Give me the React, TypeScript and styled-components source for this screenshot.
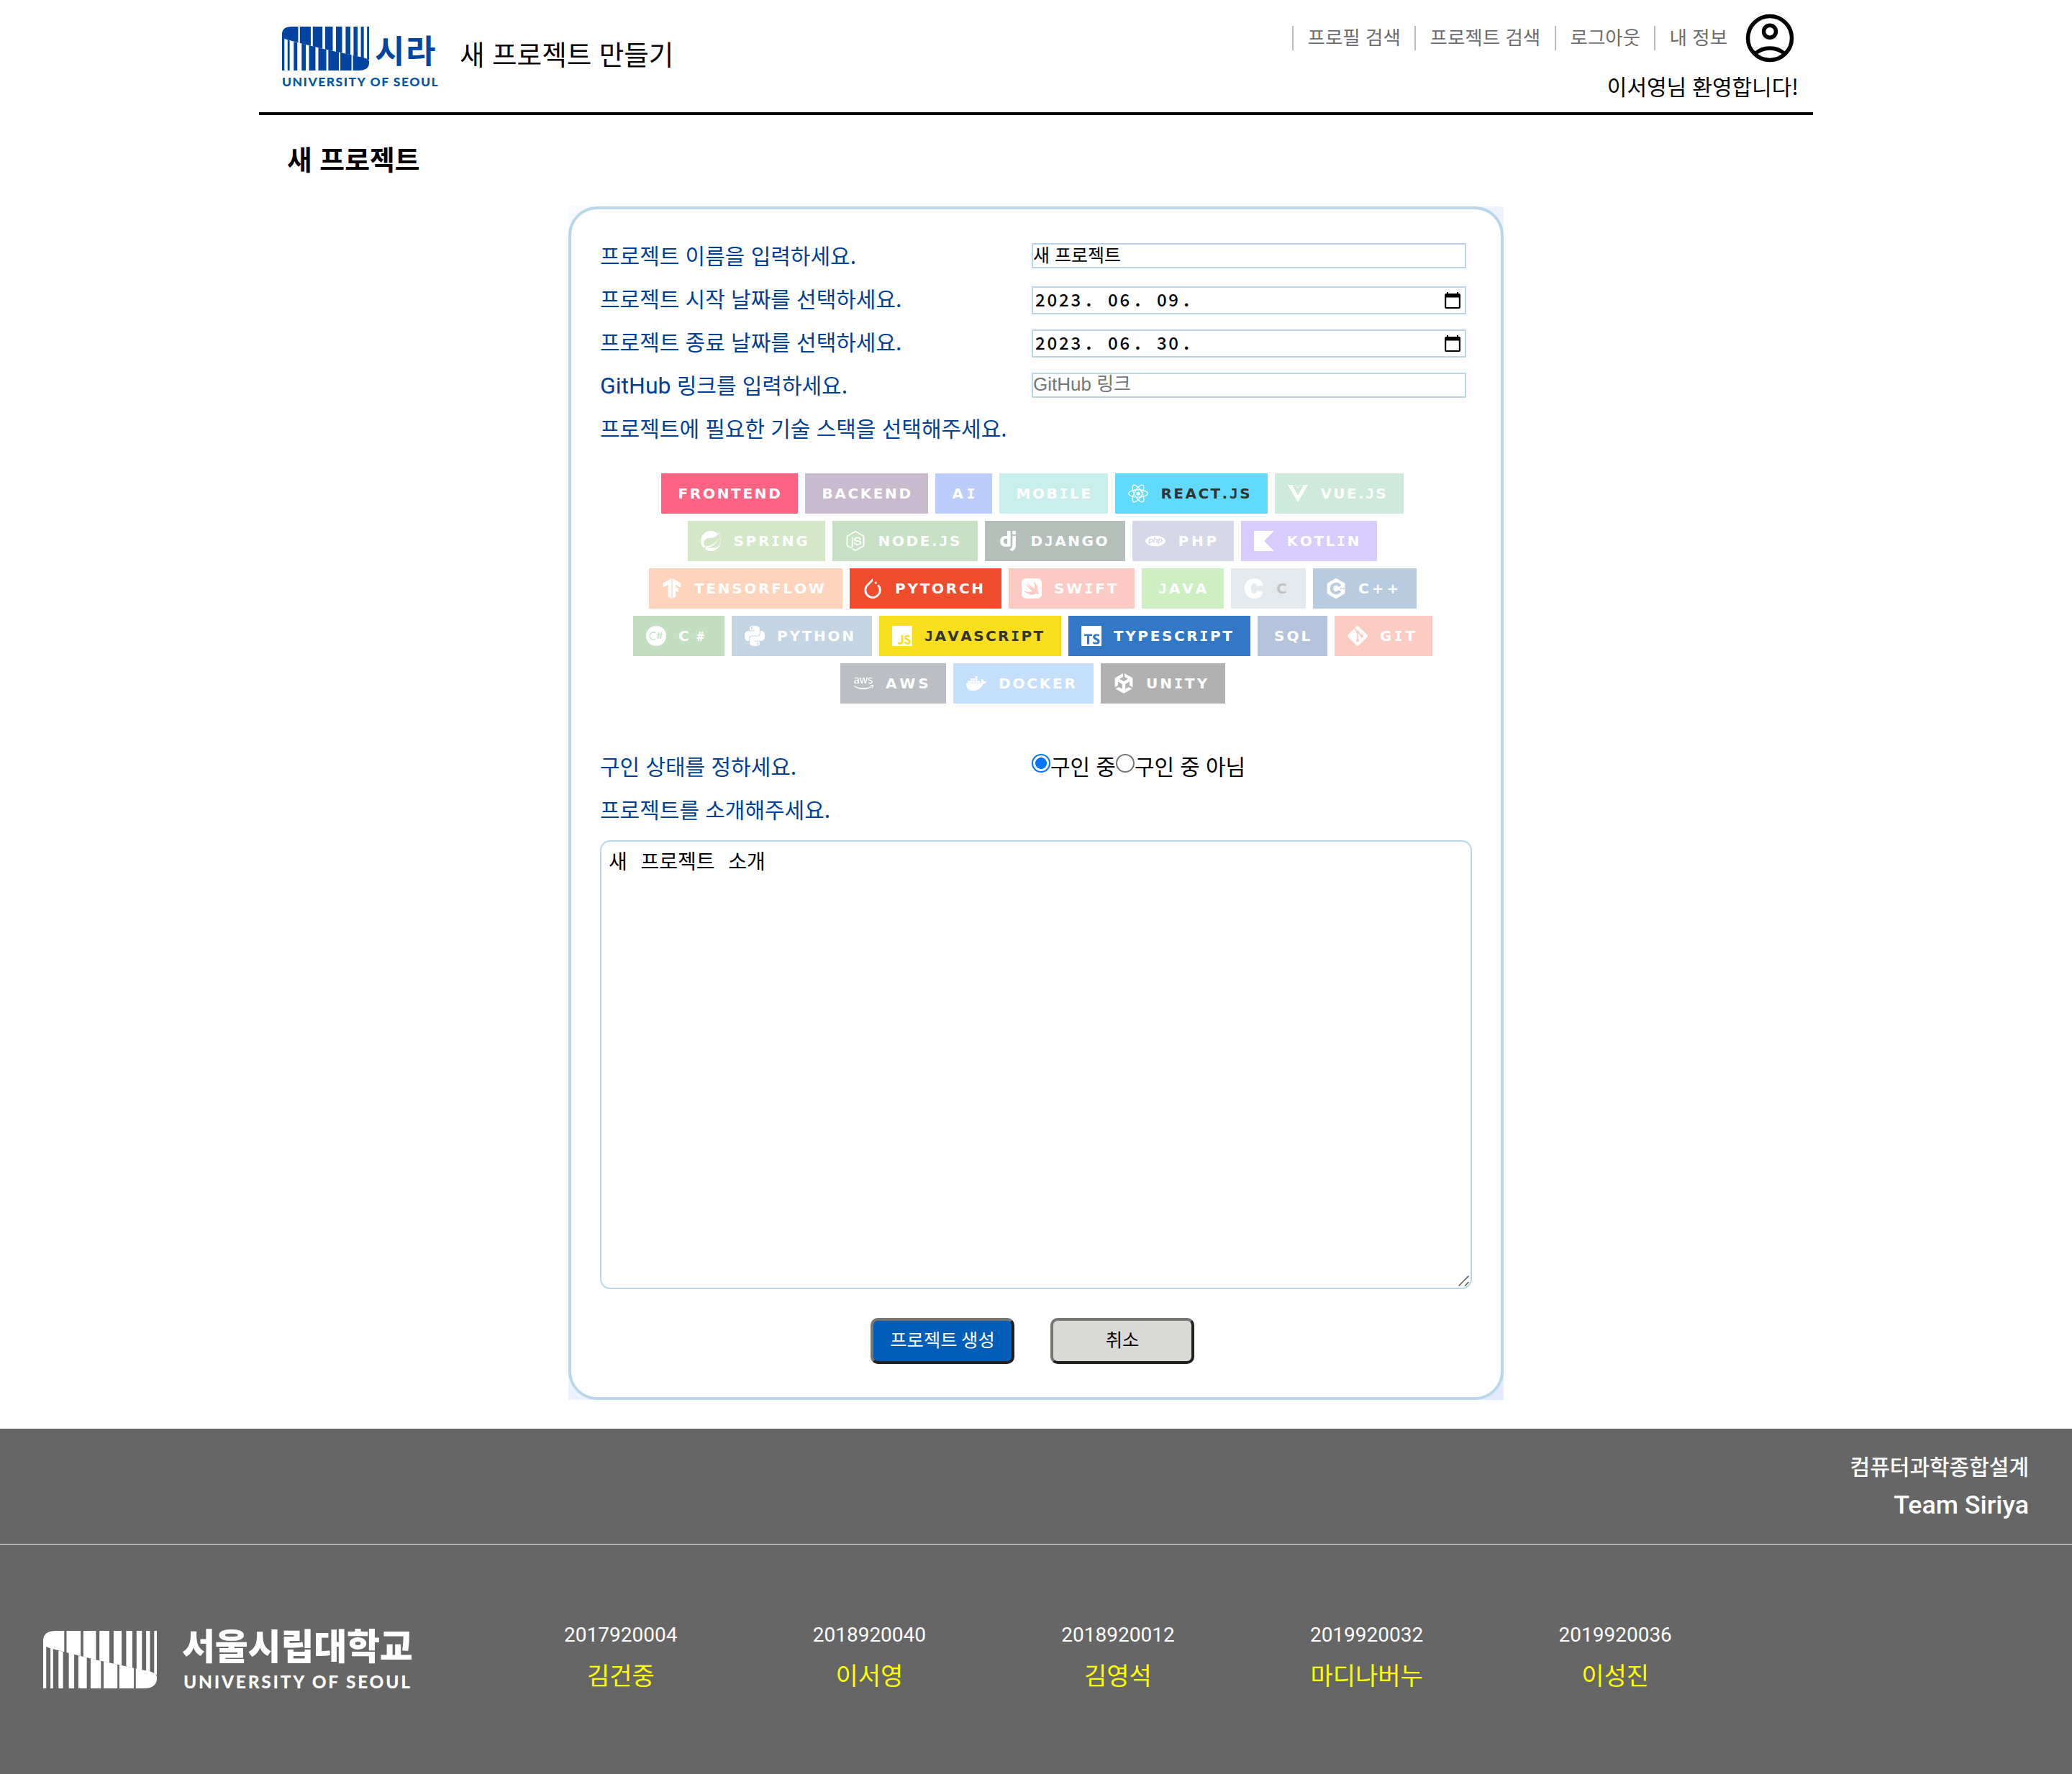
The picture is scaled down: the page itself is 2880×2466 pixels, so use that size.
import React from "react";
import styled, { createGlobalStyle } from "styled-components";
import {
  SiReact,
  SiVuedotjs,
  SiSpring,
  SiNodedotjs,
  SiDjango,
  SiPhp,
  SiKotlin,
  SiTensorflow,
  SiPytorch,
  SiSwift,
  SiCplusplus,
  SiPython,
  SiJavascript,
  SiTypescript,
  SiGit,
  SiDocker,
  SiUnity,
  SiAmazonwebservices,
} from "react-icons/si";

const KO = `"Noto Sans CJK KR", "Noto Sans", sans-serif`;
const LATIN = `Roboto, "Noto Sans CJK KR", sans-serif`;
const LINE = "#b8d8ea";
const NAVY = "#003f98";

const GlobalStyle = createGlobalStyle`
  *, *::before, *::after { box-sizing: border-box; }
  body { margin: 0; background: #fff; color: #000; font-family: ${KO}; }
  p, h1, h2, ul { margin: 0; padding: 0; font-weight: 400; }
  ul { list-style: none; }
`;

const Page = styled.div`
  display: flex;
  flex-direction: column;
  width: 2880px;
  height: 2466px;
`;

const Header = styled.header`
  display: flex;
  justify-content: space-between;
  width: 2160px;
  height: 160px;
  margin: 0 auto;
  border-bottom: 4px solid #000;
`;

const Brand = styled.div`
  display: flex;
  padding: 37px 0 0 32px;
`;

const Logo = styled.div`
  display: flex;
  flex-direction: column;
  width: 222px;
  margin-right: 25px;
`;

const LogoTop = styled.div`
  display: flex;
  height: 61px;
`;

const LogoName = styled.span`
  margin-left: 8px;
  font-size: 45px;
  font-weight: 700;
  line-height: 64px;
  letter-spacing: 1.5px;
  color: #0045a0;
`;

const LogoCaption = styled.span<{ $size: number; $spacing: number; $color: string }>`
  font-family: Lato, sans-serif;
  font-weight: 900;
  font-size: ${(p) => p.$size}px;
  letter-spacing: ${(p) => p.$spacing}px;
  line-height: 1;
  white-space: nowrap;
  color: ${(p) => p.$color};
`;

const HeaderCaption = styled.div`
  display: flex;
  margin-top: 7px;
`;

const PageName = styled.h1`
  font-size: 37.6px;
  line-height: 56px;
  word-spacing: 2px;
  margin-top: 9px;
`;

const Account = styled.div`
  display: flex;
  flex-direction: column;
  align-items: flex-end;
  padding: 13px 20px 0 0;
`;

const Menu = styled.nav`
  display: flex;
  height: 80px;
  padding-top: 23px;
`;

const MenuItem = styled.a<{ $width: number }>`
  width: ${(p) => p.$width}px;
  height: 34px;
  padding-left: 19.5px;
  border-left: 2px solid #bbb;
  font-size: 26.5px;
  line-height: 29px;
  word-spacing: 1.5px;
  white-space: nowrap;
  color: #6b6d70;
`;

const MenuRow = styled.div`
  display: flex;
`;

const Welcome = styled.p`
  font-size: 30px;
  line-height: 40px;
  word-spacing: 1.4px;
  margin-top: 6px;
`;

const SectionTitle = styled.h2`
  width: 2160px;
  height: 127px;
  margin: 0 auto;
  padding: 32px 0 0 39px;
  font-size: 37.8px;
  font-weight: 600;
  line-height: 55px;
  word-spacing: 2px;
`;

const CardBackdrop = styled.div`
  width: 1300px;
  height: 1659px;
  margin: 0 auto 40px;
  background: linear-gradient(135deg, #f8faff, #e1eaff);
`;

const Card = styled.form`
  display: flex;
  flex-direction: column;
  height: 100%;
  padding: 35px 40px 0 40px;
  border: 4px solid ${LINE};
  border-radius: 40px;
  background: #fff;
`;

const Row = styled.div`
  display: flex;
  height: 60px;
`;

const Label = styled.label`
  width: 600px;
  font-size: 30px;
  line-height: 56px;
  word-spacing: 1.5px;
  white-space: nowrap;
  color: ${NAVY};
`;

const Latin = styled.span`
  font-family: ${LATIN};
  font-size: 32px;
`;

const TextInput = styled.input<{ $drop: number }>`
  width: 604px;
  height: 35px;
  margin-top: 12px;
  padding: 0 0 ${(p) => p.$drop}px;
  border: 2px solid ${LINE};
  outline: none;
  background: #fff;
  font-family: "Liberation Sans", ${KO};
  font-size: 25px;
  color: #000;
  &::placeholder {
    font-size: 26px;
    color: #757575;
  }
`;

const DateInput = styled.div`
  display: flex;
  justify-content: space-between;
  align-items: center;
  width: 604px;
  height: 39px;
  margin-top: 12px;
  padding: 0 6px 0 3px;
  border: 2px solid ${LINE};
`;

const DateText = styled.span`
  display: flex;
  padding-bottom: 3px;
  font-size: 24px;
  font-weight: 500;
  line-height: 32px;
`;

const DateField = styled.span`
  letter-spacing: 2.8px;
`;

const DateDot = styled.span`
  width: 35px;
  padding-left: 4.5px;
  font-weight: 700;
`;

const StackGrid = styled.div`
  display: flex;
  flex-direction: column;
  align-items: center;
  gap: 10px;
  height: 378px;
  margin: 32px 0 0 -10px;
`;

const StackRow = styled.div`
  display: flex;
  gap: 10px;
`;

const Badge = styled.button<{ $width: number; $bg: string; $fg: string; $spacing: number; $icon: boolean }>`
  display: flex;
  align-items: center;
  width: ${(p) => p.$width}px;
  height: 56px;
  padding: 0 0 0 ${(p) => (p.$icon ? 18 : 23.5)}px;
  border: 0;
  background: ${(p) => p.$bg};
  color: ${(p) => p.$fg};
  font-family: "DejaVu Sans", Verdana, sans-serif;
  font-size: 20px;
  font-weight: 700;
  font-kerning: none;
  letter-spacing: ${(p) => p.$spacing}px;
  line-height: 56px;
  white-space: nowrap;
  svg {
    flex: none;
    width: 28px;
    height: 28px;
    margin-right: 17.5px;
    color: #fff;
  }
`;

const Slab = styled.span`
  font-family: "DejaVu Sans Mono", monospace;
`;

const Hash = styled.span`
  margin-left: -3px;
  font-family: "Noto Sans", sans-serif;
  font-size: 17.5px;
`;

const RadioGroup = styled.div`
  display: flex;
`;

const RadioOption = styled.label`
  display: flex;
  font-size: 30px;
  line-height: 56px;
  white-space: nowrap;
  word-spacing: 1.4px;
`;

const Radio = styled.input`
  appearance: none;
  width: 26px;
  height: 26px;
  margin: 12px 0 0;
  border: 2px solid #767676;
  border-radius: 50%;
  background: #fff;
  &:checked {
    border: 2.5px solid #0075ff;
    background: radial-gradient(circle, #0075ff 7.6px, #fff 8.2px);
  }
`;

const IntroBox = styled.div`
  position: relative;
  width: 1212px;
  height: 624px;
  margin-top: 12px;
`;

const Intro = styled.textarea`
  display: block;
  width: 100%;
  height: 100%;
  padding: 6px 10px;
  border: 2px solid ${LINE};
  border-radius: 14px;
  outline: none;
  resize: none;
  font-family: ${KO};
  font-size: 28px;
  line-height: 40px;
  word-spacing: 12.5px;
  color: #000;
`;

const Grip = styled.svg`
  position: absolute;
  right: 4px;
  bottom: 4px;
  width: 15px;
  height: 15px;
`;

const Actions = styled.div`
  display: flex;
  justify-content: center;
  gap: 50px;
  margin: 40px 0 0 -10px;
`;

const Action = styled.button<{ $bg: string; $fg: string }>`
  width: 200px;
  height: 64px;
  padding: 0 0 6px;
  border: 4px solid;
  border-color: #767676 #212121 #212121 #767676;
  border-radius: 10px;
  background: ${(p) => p.$bg};
  color: ${(p) => p.$fg};
  font-family: ${KO};
  font-size: 25.3px;
  line-height: 40px;
`;

const Footer = styled.footer`
  flex: 1;
  background: #666;
  color: #fff;
`;

const Course = styled.div`
  display: flex;
  flex-direction: column;
  align-items: flex-end;
  height: 161px;
  padding: 26px 60px 0 0;
  border-bottom: 1px solid #fff;
`;

const CourseName = styled.p`
  font-size: 30px;
  font-weight: 500;
  line-height: 50px;
`;

const TeamName = styled.p`
  font-family: ${LATIN};
  font-size: 35.8px;
  font-weight: 500;
  line-height: 58px;
  margin-top: 1px;
`;

const Credits = styled.div`
  display: flex;
  padding: 107px 0 0 60px;
`;

const School = styled.div`
  display: flex;
  width: 630px;
  padding-top: 13px;
`;

const SchoolText = styled.div`
  display: flex;
  flex-direction: column;
  margin: -15px 0 0 35px;
`;

const SchoolName = styled.span`
  font-size: 50px;
  font-weight: 900;
  line-height: 66px;
  letter-spacing: -0.2px;
  white-space: nowrap;
`;

const SchoolCaption = styled.div`
  display: flex;
  margin: 8px 0 0 2px;
`;

const Members = styled.ul`
  display: flex;
`;

const Member = styled.li`
  display: flex;
  flex-direction: column;
  align-items: center;
  width: 345.6px;
`;

const StudentId = styled.span`
  font-family: ${LATIN};
  font-size: 28px;
  line-height: 38px;
`;

const StudentName = styled.span`
  font-size: 34px;
  line-height: 50px;
  margin-top: 11px;
  color: #ff0;
`;

const topBars = [
  [78, 55], [139, 37], [183, 33], [225, 26], [262, 21], [295, 16], [322, 14], [347, 10], [368, 7],
];
const bottomBars = [
  [78, 8], [97, 7], [118, 12], [145, 14], [170, 22], [202, 27], [236, 36], [277, 38], [320, 55],
];

function Mark({ id, width, height, color }: { id: string; width: number; height: number; color: string }) {
  return (
    <svg width={width} height={height} viewBox="78 112 297 181" preserveAspectRatio="none" fill={color}>
      <clipPath id={`${id}-top`}>
        <path d="M78 150V140Q80 112 112 112H375V250L368 247L311 228L216 203L133 178L92 165Q78 158 78 150Z" />
      </clipPath>
      <clipPath id={`${id}-bottom`}>
        <path d="M78 150L86 160Q100 170 133 178L216 203L311 228L357 240Q375 247 375 256V264Q373 293 341 293H78Z" />
      </clipPath>
      <g clipPath={`url(#${id}-top)`}>
        {topBars.map(([x, w]) => (
          <rect key={x} x={x} y={112} width={w} height={181} />
        ))}
      </g>
      <g clipPath={`url(#${id}-bottom)`}>
        {bottomBars.map(([x, w]) => (
          <rect key={x} x={x} y={112} width={w} height={181} />
        ))}
      </g>
    </svg>
  );
}

function AvatarIcon() {
  return (
    <svg width="80" height="80" viewBox="0 0 80 80" fill="none" stroke="#000" strokeWidth="5.500">
      <circle cx="40" cy="40" r="30.500" />
      <circle cx="40" cy="30.800" r="8.500" />
      <path d="M18.500 62.500A31.600 31.600 0 0 1 61.500 62.500" />
    </svg>
  );
}

function CalendarIcon() {
  return (
    <svg width="22" height="23" viewBox="0 0 22 23">
      <path
        fillRule="evenodd"
        d="M3 0h2v2h12V0h2v2h1a2 2 0 0 1 2 2v17a2 2 0 0 1-2 2H2a2 2 0 0 1-2-2V4a2 2 0 0 1 2-2h1zM2.200 7.500V21h17.600V7.500z"
      />
    </svg>
  );
}

function LetterC() {
  return (
    <svg viewBox="0 0 28 28" fill="currentColor">
      <path d="M26.600 9.800C25.500 3.500 21 0 14.500 0C6.500 0 1 5.500 1 14S6.500 28 14.500 28C21 28 25.500 24.500 26.600 18L18 17.300C17.500 19.800 16.300 21 14.400 21C11.300 21 9.800 18.600 9.800 14S11.300 7 14.400 7C16.300 7 17.500 8.200 18 10.700Z" />
    </svg>
  );
}

function CSharp() {
  return (
    <svg viewBox="0 0 28 28">
      <circle cx="14" cy="14" r="14" fill="#fff" />
      <g fill="none" stroke="#c2dfbf" strokeWidth="1.300">
        <path d="M13.500 10.200A5 5 0 1 0 13.500 17.800" />
        <path d="M17.800 9l-1.300 9M21.300 9l-1.300 9M15.200 11.700h7.600M14.700 15.300h7.600" />
      </g>
    </svg>
  );
}

type Stack = {
  name: string;
  width: number;
  bg: string;
  spacing: number;
  fg?: string;
  icon?: React.ReactNode;
};

const stacks: Stack[][] = [
  [
    { name: "FRONTEND", width: 190, bg: "#ff6384", spacing: 2.7 },
    { name: "BACKEND", width: 171, bg: "#c9bace", spacing: 2.6 },
    { name: "AI", width: 79, bg: "#bbcdfc", spacing: 4.4 },
    { name: "MOBILE", width: 151, bg: "#c8efec", spacing: 2.6 },
    { name: "REACT.JS", width: 212, bg: "#61dafb", spacing: 2.45, fg: "#333", icon: <SiReact /> },
    { name: "VUE.JS", width: 179, bg: "#cdeadd", spacing: 2.35, icon: <SiVuedotjs /> },
  ],
  [
    { name: "SPRING", width: 191, bg: "#d4e8c8", spacing: 2.7, icon: <SiSpring /> },
    { name: "NODE.JS", width: 202, bg: "#c7e1c5", spacing: 2.65, icon: <SiNodedotjs /> },
    { name: "DJANGO", width: 195, bg: "#b5bfba", spacing: 2.55, icon: <SiDjango /> },
    { name: "PHP", width: 141, bg: "#d6d7e8", spacing: 3.8, icon: <SiPhp /> },
    { name: "KOTLIN", width: 189, bg: "#d8cbff", spacing: 2.65, icon: <SiKotlin /> },
  ],
  [
    { name: "TENSORFLOW", width: 269, bg: "#ffd3bc", spacing: 2.72, icon: <SiTensorflow /> },
    { name: "PYTORCH", width: 211, bg: "#ee4c2c", spacing: 2.75, icon: <SiPytorch /> },
    { name: "SWIFT", width: 175, bg: "#fccac3", spacing: 2.9, icon: <SiSwift /> },
    { name: "JAVA", width: 114, bg: "#cdefc2", spacing: 2.9 },
    { name: "C", width: 104, bg: "#e4e9ed", spacing: 0, fg: "#c2c2c2", icon: <LetterC /> },
    { name: "C++", width: 144, bg: "#b8cce1", spacing: 4, icon: <SiCplusplus /> },
  ],
  [
    { name: "C #", width: 127, bg: "#c2dfbf", spacing: 3, icon: <CSharp /> },
    { name: "PYTHON", width: 195, bg: "#c3d4e4", spacing: 2.75, icon: <SiPython /> },
    { name: "JAVASCRIPT", width: 253, bg: "#f7df1e", spacing: 2.42, fg: "#333", icon: <SiJavascript /> },
    { name: "TYPESCRIPT", width: 253, bg: "#3178c6", spacing: 2.62, icon: <SiTypescript /> },
    { name: "SQL", width: 97, bg: "#b5c4dc", spacing: 3.1 },
    { name: "GIT", width: 136, bg: "#fccbc1", spacing: 3.4, icon: <SiGit /> },
  ],
  [
    { name: "AWS", width: 147, bg: "#bbbfc4", spacing: 3.8, icon: <SiAmazonwebservices /> },
    { name: "DOCKER", width: 195, bg: "#c3dffc", spacing: 2.8, icon: <SiDocker /> },
    { name: "UNITY", width: 173, bg: "#b1b1b1", spacing: 3, icon: <SiUnity /> },
  ],
];

/* I and J take their slab-serif forms from the mono face. */
function BadgeText({ text }: { text: string }) {
  return (
    <span>
      {text.split(/([IJ#])/).map((part, i) => {
        if (part === "I" || part === "J") return <Slab key={i}>{part}</Slab>;
        if (part === "#") return <Hash key={i}>#</Hash>;
        return part;
      })}
    </span>
  );
}

function DateBox({ year, month, day }: { year: string; month: string; day: string }) {
  return (
    <DateInput>
      <DateText>
        <DateField>{year}</DateField>
        <DateDot>.</DateDot>
        <DateField>{month}</DateField>
        <DateDot>.</DateDot>
        <DateField>{day}</DateField>
        <DateDot>.</DateDot>
      </DateText>
      <CalendarIcon />
    </DateInput>
  );
}

const menu = [
  { text: "프로필 검색", width: 170 },
  { text: "프로젝트 검색", width: 195 },
  { text: "로그아웃", width: 138 },
  { text: "내 정보", width: 121 },
];

const members = [
  ["2017920004", "김건중"],
  ["2018920040", "이서영"],
  ["2018920012", "김영석"],
  ["2019920032", "마디나버누"],
  ["2019920036", "이성진"],
];

export default function App() {
  return (
    <Page>
      <GlobalStyle />
      <Header>
        <Brand>
          <Logo>
            <LogoTop>
              <Mark id="head" width={121} height={61} color="#0043a0" />
              <LogoName>시라</LogoName>
            </LogoTop>
            <HeaderCaption>
              <LogoCaption $size={17.5} $spacing={1.5} $color="#0055a8">
                UNIVERSITY OF SEOUL
              </LogoCaption>
            </HeaderCaption>
          </Logo>
          <PageName>새 프로젝트 만들기</PageName>
        </Brand>
        <Account>
          <MenuRow>
            <Menu>
              {menu.map((m) => (
                <MenuItem key={m.text} $width={m.width}>
                  {m.text}
                </MenuItem>
              ))}
            </Menu>
            <AvatarIcon />
          </MenuRow>
          <Welcome>이서영님 환영합니다!</Welcome>
        </Account>
      </Header>

      <SectionTitle>새 프로젝트</SectionTitle>

      <CardBackdrop>
        <Card>
          <Row>
            <Label>프로젝트 이름을 입력하세요.</Label>
            <TextInput $drop={6} defaultValue="새 프로젝트" />
          </Row>
          <Row>
            <Label>프로젝트 시작 날짜를 선택하세요.</Label>
            <DateBox year="2023" month="06" day="09" />
          </Row>
          <Row>
            <Label>프로젝트 종료 날짜를 선택하세요.</Label>
            <DateBox year="2023" month="06" day="30" />
          </Row>
          <Row>
            <Label>
              <Latin>GitHub</Latin> 링크를 입력하세요.
            </Label>
            <TextInput $drop={2} placeholder="GitHub 링크" />
          </Row>
          <Row>
            <Label>프로젝트에 필요한 기술 스택을 선택해주세요.</Label>
          </Row>

          <StackGrid>
            {stacks.map((row, i) => (
              <StackRow key={i}>
                {row.map((s) => (
                  <Badge
                    key={s.name}
                    type="button"
                    $width={s.width}
                    $bg={s.bg}
                    $fg={s.fg ?? "#fff"}
                    $spacing={s.spacing}
                    $icon={Boolean(s.icon)}
                  >
                    {s.icon}
                    <BadgeText text={s.name} />
                  </Badge>
                ))}
              </StackRow>
            ))}
          </StackGrid>

          <Row>
            <Label>구인 상태를 정하세요.</Label>
            <RadioGroup>
              <RadioOption>
                <Radio type="radio" name="recruit" defaultChecked />
                구인 중
              </RadioOption>
              <RadioOption>
                <Radio type="radio" name="recruit" />
                구인 중 아님
              </RadioOption>
            </RadioGroup>
          </Row>
          <Row>
            <Label>프로젝트를 소개해주세요.</Label>
          </Row>
          <IntroBox>
            <Intro defaultValue="새 프로젝트 소개" />
            <Grip viewBox="0 0 15 15" stroke="#555" strokeWidth="1.500">
              <path d="M0.500 14.500L14.500 0.500M9 14.500L14.500 9" />
            </Grip>
          </IntroBox>
          <Actions>
            <Action type="button" $bg="#005eb8" $fg="#fff">
              프로젝트 생성
            </Action>
            <Action type="button" $bg="#d9dad5" $fg="#000">
              취소
            </Action>
          </Actions>
        </Card>
      </CardBackdrop>

      <Footer>
        <Course>
          <CourseName>컴퓨터과학종합설계</CourseName>
          <TeamName>Team Siriya</TeamName>
        </Course>
        <Credits>
          <School>
            <Mark id="foot" width={158} height={80} color="#fff" />
            <SchoolText>
              <SchoolName>서울시립대학교</SchoolName>
              <SchoolCaption>
                <LogoCaption $size={24.5} $spacing={2.75} $color="#fff">
                  UNIVERSITY OF SEOUL
                </LogoCaption>
              </SchoolCaption>
            </SchoolText>
          </School>
          <Members>
            {members.map(([id, name]) => (
              <Member key={id}>
                <StudentId>{id}</StudentId>
                <StudentName>{name}</StudentName>
              </Member>
            ))}
          </Members>
        </Credits>
      </Footer>
    </Page>
  );
}
